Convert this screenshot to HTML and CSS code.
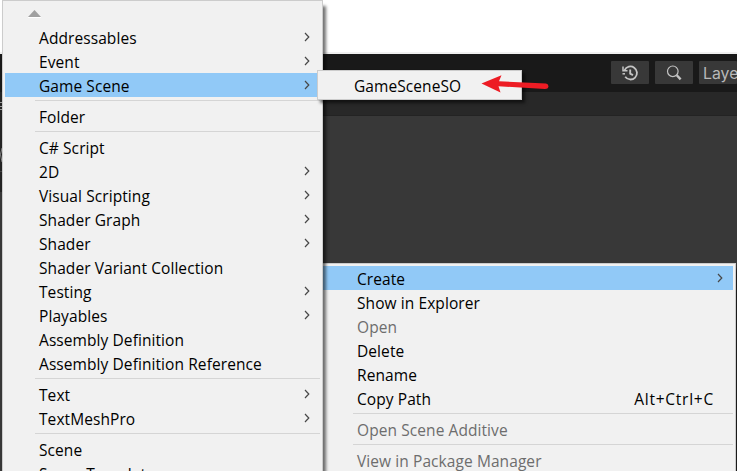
FILE: index.html
```
<!DOCTYPE html>
<html lang="en">
<head>
<meta charset="utf-8">
<title>Create menu</title>
<link rel="stylesheet" href="styles.css">
</head>
<body>
<svg class="defs" width="0" height="0"><defs><symbol id="chev" viewBox="0 0 6 10"><path d="M1 1 4.8 5 1 9" fill="none" stroke="#484848" stroke-width="1.2"/></symbol></defs></svg>
<div class="editor">
  <div class="page-top"></div>
  <div class="toolbar">
    <div class="tool"><svg width="18" height="18" viewBox="0 0 18 18" fill="none" stroke="#c4c4c4"><path d="M3.600 6.200A6.500 6.500 0 1 1 4.200 12.800" stroke-width="1.8"/><path d="M2 2.500v4.200h4.500" stroke-width="1.5"/><path d="M1.500 9.800h2.500" stroke-width="1.5"/><path d="M9.200 5.500v4.200l2.800 1.500" stroke-width="1.9"/></svg></div>
    <div class="tool"><svg width="18" height="18" viewBox="0 0 18 18" fill="none" stroke="#c4c4c4"><circle cx="7.800" cy="7.300" r="5.3" stroke-width="1.2"/><path d="M11.800 11.300 15.600 15.400" stroke-width="2.4"/></svg></div>
    <div class="tool layers">Layers</div>
  </div>
  <div class="tabbar"></div>
  <div class="canvas"></div>
</div>
<svg class="edge" width="2" height="100" viewBox="0 0 2 100"><path d="M0 0h2v100H0z" fill="#242424"/><path d="M0 10.500h2M0 14.500h2M0 17.500h2" stroke="#999"/><path d="M2 56Q-1 62 2 70" fill="none" stroke="#888"/><path d="M0 79.500h2" stroke="#444"/></svg>

<div class="menu context">
  <div class="item active">Create<svg class="chev"><use href="#chev"/></svg></div>
  <div class="item">Show in Explorer</div>
  <div class="item disabled">Open</div>
  <div class="item">Delete</div>
  <div class="item">Rename</div>
  <div class="item">Copy Path<span class="key">Alt+Ctrl+C</span></div>
  <div class="sep"></div>
  <div class="item disabled">Open Scene Additive</div>
  <div class="sep"></div>
  <div class="item disabled">View in Package Manager</div>
</div>

<div class="menu create">
  <div class="scroll-up"><svg width="14" height="8" viewBox="0 0 14 8"><path d="M0 7 6.5 0 13 7z" fill="#a0a0a0"/><path d="M0 7.5h13" stroke="#fff"/></svg></div>
  <div class="item">Addressables<svg class="chev"><use href="#chev"/></svg></div>
  <div class="item">Event<svg class="chev"><use href="#chev"/></svg></div>
  <div class="item active">Game Scene<svg class="chev"><use href="#chev"/></svg></div>
  <div class="sep"></div>
  <div class="item">Folder</div>
  <div class="sep"></div>
  <div class="item">C# Script</div>
  <div class="item">2D<svg class="chev"><use href="#chev"/></svg></div>
  <div class="item">Visual Scripting<svg class="chev"><use href="#chev"/></svg></div>
  <div class="item">Shader Graph<svg class="chev"><use href="#chev"/></svg></div>
  <div class="item">Shader<svg class="chev"><use href="#chev"/></svg></div>
  <div class="item">Shader Variant Collection</div>
  <div class="item">Testing<svg class="chev"><use href="#chev"/></svg></div>
  <div class="item">Playables<svg class="chev"><use href="#chev"/></svg></div>
  <div class="item">Assembly Definition</div>
  <div class="item">Assembly Definition Reference</div>
  <div class="sep"></div>
  <div class="item">Text<svg class="chev"><use href="#chev"/></svg></div>
  <div class="item">TextMeshPro<svg class="chev"><use href="#chev"/></svg></div>
  <div class="sep"></div>
  <div class="item">Scene</div>
  <div class="item">Scene Template</div>
</div>

<div class="menu submenu">
  <div class="item">GameSceneSO</div>
</div>
<svg class="pointer" width="70" height="22" viewBox="0 0 70 22"><path d="M0.5 9.5 20.5 1.200 18 7.200 65 9.500Q67.5 10 67.500 12.500 67 15 64 15L17.500 12.200 19.500 18.500z" fill="#ed1c24"/></svg>
</body>
</html>
```
FILE: styles.css
```
* { box-sizing: border-box; }
html, body { margin: 0; height: 100%; overflow: hidden; }
body {
  position: relative;
  background: #383838;
  color: #000;
  font: 15.5px/24px "Open Sans", "Noto Sans", sans-serif;
}
.defs { position: absolute; }
.edge { position: absolute; left: 0; top: 92px; }
.editor { display: flex; flex-direction: column; height: 471px; }
.page-top { flex: none; height: 54px; background: #fff; border-bottom: 2px solid #f0f0f0; }
.toolbar {
  flex: none;
  display: flex;
  justify-content: flex-end;
  gap: 6px;
  height: 38px;
  padding-top: 7px;
  background: #191919;
}
.tool {
  display: flex;
  align-items: center;
  justify-content: center;
  width: 38px;
  height: 23px;
  border-radius: 1px;
  background: #383838;
  color: #b8b8b8;
}
.tool.layers {
  width: 38px;
  padding: 1px 0 0 4px;
  justify-content: flex-start;
  overflow: hidden;
  font: 15.8px/23px Inter, sans-serif;
}
.tabbar { flex: none; height: 24px; background: #282828; border-bottom: 1px solid #232323; }
.canvas { flex: 1; background: #383838; }

.menu {
  position: absolute;
  background: #f1f1f1;
  border: 1px solid #ccc;
}
.item {
  display: flex;
  align-items: center;
  height: 24px;
  margin: 0 2px;
  padding: 2px 0 0 34px;
  line-height: 24px;
  white-space: nowrap;
  letter-spacing: 0.08px;
}
.item.active { background: #91c9f7; }
.item.disabled { color: #6d6d6d; }
.sep { height: 7px; margin-left: 32px; padding-top: 3px; }
.sep::before { content: ""; display: block; height: 1px; background: #d5d5d5; }
.chev { width: 6px; height: 10px; margin: 0 10px 3px auto; }
.key { margin: 0 19px 0 auto; letter-spacing: 0.75px; }

.create {
  left: 2px;
  top: 0;
  width: 321px;
  height: 480px;
  box-shadow: 3px 6px 3px rgba(0, 0, 0, 0.55);
}
.create .sep { margin-right: 2px; }
.scroll-up { display: flex; height: 24px; padding: 9px 0 0 25px; }
.context {
  left: 320px;
  top: 263px;
  width: 416px;
  height: 220px;
  padding-top: 2px;
  box-shadow: 3px 6px 3px rgba(0, 0, 0, 0.55);
}
.context .sep { margin-right: 2px; }
.submenu {
  left: 317px;
  top: 70px;
  width: 205px;
  height: 30px;
  padding-top: 2px;
  box-shadow: 3px 3px 3px rgba(0, 0, 0, 0.55);
}
.pointer { position: absolute; left: 481px; top: 74px; }
```
